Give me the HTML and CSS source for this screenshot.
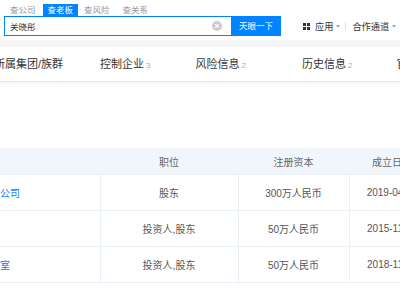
FILE: index.html
```html
<!DOCTYPE html>
<html lang="zh">
<head>
<meta charset="utf-8">
<link rel="stylesheet" href="styles.css">
</head>
<body>
<div class="page">
  <div class="top">
    <div class="left">
      <div class="stabs">
        <span class="stab">查公司</span>
        <span class="stab on">查老板</span>
        <span class="stab">查风险</span>
        <span class="stab">查关系</span>
      </div>
      <div class="search">
        <div class="input">
          <span class="q">关晓彤</span>
          <svg class="clear" width="10" height="10" viewBox="0 0 10 10"><circle cx="5" cy="5" r="5" fill="#cccccc"/><path d="M3.2 3.2 L6.8 6.8 M6.8 3.2 L3.2 6.8" stroke="#fff" stroke-width="1.2"/></svg>
        </div>
        <div class="btn">天眼一下</div>
      </div>
    </div>
    <div class="right">
      <svg class="grid" width="7" height="7" viewBox="0 0 7 7"><rect x="0" y="0" width="3" height="3" fill="#333"/><rect x="4" y="0" width="3" height="3" fill="#333"/><rect x="0" y="4" width="3" height="3" fill="#333"/><rect x="4" y="4" width="3" height="3" fill="#333"/></svg>
      <span class="nav">应用</span><i class="tri"></i>
      <i class="sep"></i>
      <span class="nav">合作通道</span><i class="tri"></i>
    </div>
  </div>
  <div class="band"></div>
  <div class="tabbar">
    <div class="tab t1">所属集团/族群</div>
    <div class="tab t2">控制企业<span class="cnt">3</span></div>
    <div class="tab t3">风险信息<span class="cnt">2</span></div>
    <div class="tab t4">历史信息<span class="cnt">2</span></div>
    <div class="tab t5">官网</div>
  </div>
  <table class="tbl">
    <colgroup><col class="c1"><col class="c2"><col class="c3"><col class="c4"></colgroup>
    <thead>
      <tr><th class="name"></th><th>职位</th><th>注册资本</th><th>成立日期</th></tr>
    </thead>
    <tbody>
      <tr><td class="name"><a>关晓彤影视有限公司</a></td><td>股东</td><td>300万人民币</td><td>2019-04-16</td></tr>
      <tr><td class="name"><a>关晓彤工作室</a></td><td>投资人,股东</td><td>50万人民币</td><td>2015-11-20</td></tr>
      <tr><td class="name"><a>关晓彤影视工作室</a></td><td>投资人,股东</td><td>50万人民币</td><td>2018-11-08</td></tr>
    </tbody>
  </table>
</div>
</body>
</html>
```
FILE: styles.css
```css
html, body { margin: 0; padding: 0; background: #fff; }
body {
  font-family: "Liberation Sans", "Noto Sans CJK SC", sans-serif;
  color: #333;
  width: 400px;
  height: 300px;
  overflow: hidden;
}
.page { width: 400px; overflow: hidden; }

.top { display: flex; align-items: flex-end; height: 40px; padding-bottom: 4px; box-sizing: border-box; }
.left { padding-left: 4px; padding-top: 4px; }
.stabs { display: flex; height: 12px; }
.stab {
  font-size: 8.5px; line-height: 12px; color: #999;
  padding: 0 6px; white-space: nowrap;
}
.stab:first-child { margin-right: 1px; }
.stab:nth-child(3) { margin-right: 1px; }
.stab.on { background: #0084ff; color: #fff; padding: 0 5px; }

.search { display: flex; height: 20px; }
.input {
  width: 227px; height: 20px; box-sizing: border-box;
  border: 1px solid #0084ff; border-right: none;
  display: flex; align-items: center; justify-content: space-between;
  padding: 0 9px 0 5px;
}
.q { font-size: 8.5px; color: #333; }
.clear { display: block; }
.btn {
  width: 50px; height: 20px; background: #0084ff; color: #fff;
  font-size: 8.5px; line-height: 20px; text-align: center;
}

.right { display: flex; align-items: center; height: 20px; margin-left: 22px; white-space: nowrap; }
.grid { display: block; margin-right: 5px; }
.nav { font-size: 9.2px; color: #333; }
.tri {
  display: inline-block; width: 0; height: 0; margin-left: 3px;
  border-left: 2px solid transparent; border-right: 2px solid transparent;
  border-top: 3px solid #aaa;
}
.sep { display: inline-block; width: 1px; height: 9px; background: #e0e0e0; margin: 0 6px 0 5px; }

.band { height: 7px; background: #f5f5f5; }

.tabbar {
  display: flex; align-items: center; height: 35px; box-sizing: border-box;
  padding-bottom: 3px;
  border-bottom: 1px solid #e6e6e6;
  box-shadow: 0 1px 2px rgba(0,0,0,0.05);
  white-space: nowrap;
}
.tab { font-size: 11px; color: #333; flex: none; display: flex; align-items: baseline; }
.cnt { font-size: 8px; color: #aaa; margin-left: 2px; }
.t1 { margin-left: -6px; }
.t2 { margin-left: 37px; }
.t3 { margin-left: 45px; }
.t4 { margin-left: 56px; }
.t5 { margin-left: 44px; }

.tbl {
  margin-top: 66px; margin-left: -80px;
  border-collapse: collapse; table-layout: fixed;
  width: 515px;
  font-size: 10px;
}
.c1 { width: 180px; }
.c2 { width: 138px; }
.c3 { width: 111px; }
.c4 { width: 86px; }
.tbl th {
  height: 26px; padding: 0; background: #f1f6fc; color: #666;
  font-weight: normal; text-align: center;
  border-bottom: 1px solid #e9eff7;
}
.tbl td {
  height: 36px; padding: 0; box-sizing: border-box; text-align: center; color: #555;
  border-bottom: 1px solid #e9eff7; border-left: 1px solid #e9eff7;
  white-space: nowrap; overflow: hidden;
}
.tbl td.name { border-left: none; text-align: left; padding-left: 10px; }
.tbl th.name { text-align: left; padding-left: 10px; }
.tbl a { color: #0084ff; }
```
